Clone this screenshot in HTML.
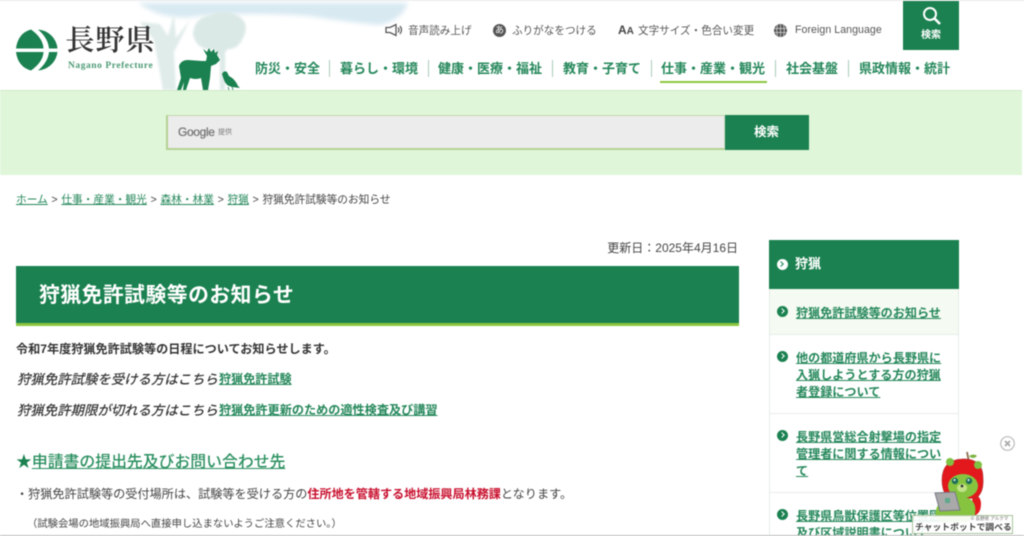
<!DOCTYPE html>
<html lang="ja"><head><meta charset="utf-8"><title>狩猟免許試験等のお知らせ</title>
<style>
html,body{margin:0;padding:0;background:#fff}
body{width:1024px;height:536px;overflow:hidden;position:relative;font-family:"Liberation Sans","Noto Sans CJK JP",sans-serif;color:#333}
#w{position:absolute;left:0;top:0;width:1024px;height:536px;overflow:hidden;filter:blur(.45px)}
.t{position:absolute;white-space:nowrap;line-height:1}
.n{font-size:13px;font-weight:700;color:#24875a;top:62px}
.s{position:absolute;width:1px;height:17px;background:#a9cdb9;top:60px}
.u{font-size:10.6px;color:#555;top:26px}
a{color:#24875a;text-decoration:underline}
.side{font-size:12.1px;font-weight:700;line-height:17.3px;color:#24875a;text-decoration:underline;position:absolute;left:796px;width:150px}
.box{position:absolute;left:769px;width:188px;border:1px solid #e6ece8;border-top:0;background:#fff}
.dot{position:absolute;left:777px;width:11px;height:11px;border-radius:50%;background:#1b8150}
.dot:after{content:"";position:absolute;left:2.5px;top:3px;width:3px;height:3px;border-top:1.5px solid #fff;border-right:1.5px solid #fff;transform:rotate(45deg)}
</style></head><body><div id="w">
<div style="position:absolute;left:0;top:0;width:1024px;height:1px;background:#e8e8e8"></div>
<svg style="position:absolute;left:130px;top:0" width="290" height="91" viewBox="0 0 290 91">
<defs><filter id="bl"><feGaussianBlur stdDeviation="2.5"/></filter><filter id="bl2"><feGaussianBlur stdDeviation="1"/></filter></defs>
<path d="M8 3H278Q272 20 250 25Q215 22 180 16Q120 12 70 16Q35 22 8 3Z" fill="#d8e9f2" filter="url(#bl)"/>
<path d="M10 22L24 40L33 90H46L44 52L60 20L46 38L44 14L38 36L30 24Z" fill="#e0ecea" filter="url(#bl2)"/>
<path d="M63 34Q64 18 80 15Q96 7 110 17Q119 24 114 36Q108 50 98 49L95 52L95 90H90L90 58L84 50Q66 50 63 34Z" fill="#dbe9e6" filter="url(#bl2)"/>
</svg>
<svg style="position:absolute;left:0;top:0" width="250" height="91" viewBox="0 0 250 91">
<path d="M177 90L181 78L179 66Q181 60 188 60L202 61L206 61L207 56L203 49L207 52L209 48L211 52L214 49L215 53L218 51L217 55L220 60L216 64L211 66L210 78L208 90H203L201 78Q196 80 190 78L186 90H183L184 82L181 90Z" fill="#1b8150"/>
<path d="M222 74Q224 70 227 72L229 76Q235 79 238 86L240 88L232 87Q226 86 224 80Z" fill="#1b8150"/>
<path d="M228 87L229 90M232 87L233 90" stroke="#1b8150" stroke-width=".8"/>
<path d="M16 48.500Q18 33 31 29.500Q43 38 43.500 48.500ZM16 52H43.500Q43 62 31 70.500Q18 67 16 52ZM38 29.500A21 21 0 0 1 57.500 48.500H49Q48 38 38 29.500ZM49 52H57.500A21 21 0 0 1 38 70.500Q48 62 49 52Z" fill="#1b8150"/>
</svg>
<div class="t" style="left:65.500px;top:27px;font:600 29px/1 'Liberation Serif','Noto Serif CJK JP','Noto Serif CJK SC',serif;letter-spacing:1px;color:#333">長野県</div>
<div class="t" style="left:68px;top:61.500px;font:700 9.500px/1 'Liberation Serif',serif;color:#4c9a74;letter-spacing:.55px">Nagano Prefecture</div>

<svg style="position:absolute;left:385px;top:23px" width="19" height="14" viewBox="0 0 19 14"><path d="M1 4.500H5L11 1.500V12.500L5 9.500H1Z" fill="none" stroke="#555" stroke-width="1.300"/><path d="M13 4.500Q15 7 13 9.500M15 3Q18 7 15 11" fill="none" stroke="#555" stroke-width="1.200"/></svg>
<div class="t u" style="left:408px">音声読み上げ</div>
<div style="position:absolute;left:493px;top:24px;width:13px;height:13px;border-radius:50%;background:#555;color:#fff;font-size:9px;line-height:13px;text-align:center">あ</div>
<div class="t u" style="left:512px">ふりがなをつける</div>
<div class="t" style="left:618px;top:24px;font-size:12px;font-weight:700;color:#444">A<span style="font-size:10px">A</span></div>
<div class="t u" style="left:638px">文字サイズ・色合い変更</div>
<svg style="position:absolute;left:774px;top:23.500px" width="13" height="13" viewBox="0 0 13 13"><circle cx="6.500" cy="6.500" r="6.500" fill="#555"/><path d="M0 4.500H13M0 8.500H13M6.500 0V13M3.500 1Q2 6.500 3.500 12M9.500 1Q11 6.500 9.500 12" stroke="#ddd" stroke-width=".7" fill="none"/></svg>
<div class="t" style="left:795px;top:25px;font-size:10.600px;color:#555;letter-spacing:.05px">Foreign Language</div>
<div style="position:absolute;left:903px;top:1px;width:56px;height:49px;background:#1b8150"></div>
<svg style="position:absolute;left:921px;top:6px" width="21" height="20" viewBox="0 0 21 20"><circle cx="9" cy="8" r="6" fill="none" stroke="#fff" stroke-width="2"/><path d="M13.500 12.500L19 18" stroke="#fff" stroke-width="2.600"/></svg>
<div class="t" style="left:921px;top:31px;font-size:10px;font-weight:700;color:#fff">検索</div>

<div class="t n" style="left:255px">防災・安全</div><div class="s" style="left:329px"></div>
<div class="t n" style="left:340px">暮らし・環境</div><div class="s" style="left:428px"></div>
<div class="t n" style="left:438px">健康・医療・福祉</div><div class="s" style="left:552px"></div>
<div class="t n" style="left:563px">教育・子育て</div><div class="s" style="left:651px"></div>
<div class="t n" style="left:661px">仕事・産業・観光</div><div class="s" style="left:775px"></div>
<div style="position:absolute;left:660px;top:81px;width:107px;height:2px;background:#8cc63f"></div>
<div class="t n" style="left:786px">社会基盤</div><div class="s" style="left:848px"></div>
<div class="t n" style="left:859px">県政情報・統計</div>

<div style="position:absolute;left:0;top:90px;width:1022px;height:85px;background:#dff6d9;border-top:1px solid #cfe8c8;box-sizing:border-box"></div>
<div style="position:absolute;left:166px;top:115px;width:559px;height:35px;box-sizing:border-box;background:#ececec;border:1px solid #d5dcc8;border-left:2px solid #b5d193;border-bottom:2px solid #b5d193;border-top:1px solid #c4d7ae"></div>
<div class="t" style="left:178px;top:126px;font-size:12px;color:#777;-webkit-text-stroke:.3px #777;letter-spacing:-.35px">Google</div>
<div class="t" style="left:218px;top:129px;font-size:7px;color:#777">提供</div>
<div style="position:absolute;left:725px;top:115px;width:84px;height:35px;background:#1b8150"></div>
<div class="t" style="left:754px;top:126px;font-size:12.500px;font-weight:700;color:#fff">検索</div>

<div class="t" style="left:16px;top:194.500px;font-size:10.700px;word-spacing:.7px;color:#444"><a>ホーム</a> &gt; <a>仕事・産業・観光</a> &gt; <a>森林・林業</a> &gt; <a>狩猟</a> &gt; 狩猟免許試験等のお知らせ</div>
<div class="t" style="right:286px;top:242px;font-size:12px;color:#444">更新日：2025年4月16日</div>
<div style="position:absolute;left:16px;top:266px;width:723px;height:57px;background:#1b8150;border-bottom:3px solid #8cc63f"></div>
<div class="t" style="left:39px;top:285.500px;font-size:20.800px;font-weight:700;color:#fff;letter-spacing:.5px">狩猟免許試験等のお知らせ</div>

<div class="t" style="left:16px;top:343px;font-size:12.130px;font-weight:700;color:#333">令和7年度狩猟免許試験等の日程についてお知らせします。</div>
<div class="t" style="left:17px;top:373px;font-size:13.400px;font-style:italic;font-weight:500;color:#333">狩猟免許試験を受ける方はこちら</div>
<div class="t" style="left:219px;top:373px;font-size:12.100px;font-weight:700"><a>狩猟免許試験</a></div>
<div class="t" style="left:17px;top:404px;font-size:13.400px;font-style:italic;font-weight:500;color:#333">狩猟免許期限が切れる方はこちら</div>
<div class="t" style="left:219px;top:404px;font-size:12.150px;font-weight:700"><a>狩猟免許更新のための適性検査及び講習</a></div>
<div class="t" style="left:16px;top:455px;font-size:15.850px;font-weight:500;color:#1b8150">★<a style="color:#2a8f5f">申請書の提出先及びお問い合わせ先</a></div>
<div class="t" style="left:16px;top:488px;font-size:12.150px;color:#444">・狩猟免許試験等の受付場所は、試験等を受ける方の<b style="color:#c8102e;font-size:12.100px">住所地を管轄する地域振興局林務課</b>となります。</div>
<div class="t" style="left:27px;top:520px;font-size:10.330px;color:#444">（試験会場の地域振興局へ直接申し込まないようご注意ください。）</div>

<div style="position:absolute;left:769px;top:240px;width:190px;height:49px;background:#1b8150"></div>
<div style="position:absolute;left:777px;top:259px;width:11px;height:11px;border-radius:50%;background:#fff"></div>
<div style="position:absolute;left:779px;top:262px;width:3px;height:3px;border-top:1.500px solid #1b8150;border-right:1.500px solid #1b8150;transform:rotate(45deg)"></div>
<div class="t" style="left:795px;top:257px;font-size:13px;font-weight:700;color:#fff">狩猟</div>
<div class="box" style="top:289px;height:45px;background:#f5fbf2"></div>
<div class="box" style="top:335px;height:78px"></div>
<div class="box" style="top:414px;height:78px"></div>
<div class="box" style="top:493px;height:50px"></div>
<div class="dot" style="top:306px"></div><div class="side" style="top:304.500px">狩猟免許試験等のお知らせ</div>
<div class="dot" style="top:351px"></div><div class="side" style="top:349.500px">他の都道府県から長野県に入猟しようとする方の狩猟者登録について</div>
<div class="dot" style="top:430px"></div><div class="side" style="top:428.500px">長野県営総合射撃場の指定管理者に関する情報について</div>
<div class="dot" style="top:509px"></div><div class="side" style="top:507.500px">長野県鳥獣保護区等位置図及び区域説明書について</div>

<svg style="position:absolute;left:1000px;top:436px" width="15" height="15" viewBox="0 0 15 15"><circle cx="7.500" cy="7.500" r="6.800" fill="#fff" stroke="#bbb" stroke-width="1.200"/><path d="M5 5L10 10M10 5L5 10" stroke="#aaa" stroke-width="1.800"/></svg>
<svg style="position:absolute;left:930px;top:448px" width="70" height="76" viewBox="0 0 70 76">
<path d="M37 4L39 14" stroke="#8a6a4a" stroke-width="1.800"/><path d="M39 8Q44 5 47 8Q43 12 39 8Z" fill="#7cb342"/>
<path d="M42 46Q51 47 51 56Q51 66 43 68Z" fill="#e2181c"/>
<path d="M12 32Q12 12 32 11Q53 10 53 30Q54 45 46 50L20 52Q12 45 12 32Z" fill="#e2181c" stroke="#a33" stroke-width=".6"/>
<circle cx="20" cy="14" r="4" fill="#7fc241"/><circle cx="48" cy="17" r="4" fill="#7fc241"/>
<ellipse cx="33" cy="38" rx="15" ry="12" fill="#86c440"/>
<circle cx="25" cy="33" r="3.200" fill="#1d6e5a"/><circle cx="39" cy="33" r="3.200" fill="#1d6e5a"/><circle cx="24.500" cy="32" r="1" fill="#fff"/><circle cx="38.500" cy="32" r="1" fill="#fff"/>
<ellipse cx="32" cy="40" rx="5" ry="4" fill="#c3e28a"/><circle cx="32" cy="38" r="1.300" fill="#223"/>
<path d="M12 52Q26 47 38 50Q47 54 45 66Q43 74 34 74H12Q4 72 6 62Q8 55 12 52Z" fill="#86c440"/>
<path d="M5 45L25 44L30 62L10 63Z" fill="#a9a9a9" stroke="#778" stroke-width="1"/><rect x="15" y="50" width="5" height="5" fill="#5fa88c"/>
</svg>
<div style="position:absolute;left:912px;top:515px;width:101px;height:19px;background:rgba(255,255,255,.92);border:1px solid #a9c29a;box-sizing:border-box"></div>
<div class="t" style="left:971px;top:516.500px;font-size:4.500px;color:#666">© 長野県 アルクマ</div>
<div class="t" style="left:915px;top:523px;font-size:8.800px;font-weight:700;color:#444">チャットボットで調べる</div>
<div style="position:absolute;left:0;top:535px;width:1024px;height:1px;background:#bbb"></div>
</div></body></html>
